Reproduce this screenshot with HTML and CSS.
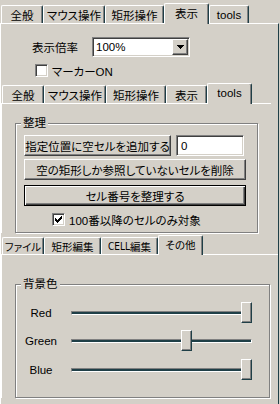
FILE: index.html
```html
<!DOCTYPE html>
<html>
<head>
<meta charset="utf-8">
<title>設定</title>
<link rel="stylesheet" href="styles.css">
</head>
<body>
<div class="tabstrip strip-top">
	<div class="tab w42">全般</div>
	<div class="tab w62">マウス操作</div>
	<div class="tab w59">矩形操作</div>
	<div class="tab sel w45">表示</div>
	<div class="tab w40">tools</div>
</div>
<div class="page outer">
	<div class="zoomrow">
		<span class="caption">表示倍率</span>
		<div class="combo sunken">
			<span class="combo-text">100%</span>
			<span class="combo-btn raised"><svg width="7" height="4" viewBox="0 0 7 4"><path d="M0 0h7v1h-1v1h-1v1h-1v1h-1v-1h-1v-1h-1v-1h-1z" fill="#000"/></svg></span>
		</div>
	</div>
	<div class="checkrow markrow">
		<span class="check sunken"></span>
		<span>マーカーON</span>
	</div>

	<!-- tools page -->
	<div class="subtabs mid">
		<div class="tabstrip strip-mid">
			<div class="tab w42">全般</div>
			<div class="tab w62">マウス操作</div>
			<div class="tab w60">矩形操作</div>
			<div class="tab w41">表示</div>
			<div class="tab sel w45">tools</div>
		</div>
		<div class="page">
			<div class="group tidy">
				<span class="group-title">整理</span>
				<div class="btnrow">
					<div class="btn raised add">指定位置に空セルを追加する</div>
					<div class="edit sunken">0</div>
				</div>
				<div class="btn raised wide gap3">空の矩形しか参照していないセルを削除</div>
				<div class="btn default wide gap5">セル番号を整理する</div>
				<div class="checkrow only100">
					<span class="check sunken"><svg width="9" height="9" viewBox="0 0 9 9"><path d="M1 3h1v3h-1z M2 4h1v3h-1z M3 5h1v3h-1z M4 4h1v3h-1z M5 3h1v3h-1z M6 2h1v3h-1z M7 1h1v3h-1z" fill="#000"/></svg></span>
					<span>100番以降のセルのみ対象</span>
				</div>
			</div>
		</div>
	</div>

	<!-- other page -->
	<div class="subtabs low">
		<div class="tabstrip strip-low">
			<div class="tab w42">ファイル</div>
			<div class="tab w57">矩形編集</div>
			<div class="tab w57"><span class="narrow">CELL</span>編集</div>
			<div class="tab sel w45">その他</div>
		</div>
		<div class="page">
			<div class="group bgcolor">
				<span class="group-title">背景色</span>
				<div class="srow">
					<span class="slabel">Red</span>
					<div class="slider"><div class="track"></div><div class="thumb" style="left:170px"></div></div>
				</div>
				<div class="srow gap7">
					<span class="slabel">Green</span>
					<div class="slider"><div class="track"></div><div class="thumb" style="left:110px"></div></div>
				</div>
				<div class="srow gap8">
					<span class="slabel">Blue</span>
					<div class="slider"><div class="track"></div><div class="thumb" style="left:170px"></div></div>
				</div>
			</div>
		</div>
	</div>
</div>
</body>
</html>
```

FILE: styles.css
```css
* {
	box-sizing: border-box;
}
body {
	margin: 0;
	width: 280px;
	height: 404px;
	overflow: hidden;
	display: flex;
	flex-direction: column;
	background-color: #d4d0c8;
	color: #000;
	font-family: "Liberation Sans", "Noto Sans CJK JP", sans-serif;
	font-size: 11.5px;
	font-feature-settings: "palt";
}

/* tab strips */
.tabstrip {
	display: flex;
	align-items: flex-end;
	padding-left: 1px;
	flex-shrink: 0;
}
.strip-top { height: 23px; }
.strip-mid { height: 20px; }
.strip-low { height: 19px; }
.tab {
	height: 18px;
	display: flex;
	align-items: center;
	justify-content: center;
	white-space: nowrap;
	border-top: 1px solid #fff;
	border-left: 1px solid #fff;
	border-right: 1px solid #1f3f47;
	border-radius: 2px 2px 0 0;
	box-shadow: inset -1px 0 #808080;
}
.strip-low .tab {
	height: 17px;
	font-size: 10.5px;
}
.narrow { font-family: "DejaVu Sans Condensed", "Liberation Sans Narrow", sans-serif; font-size: 10px; }
.tab.sel {
	height: 21px;
	margin-bottom: -1px;
	padding-bottom: 2px;
	position: relative;
	z-index: 1;
	background-color: #d4d0c8;
}
.strip-low .tab.sel { height: 20px; }
.w40 { width: 40px; }
.w41 { width: 41px; }
.w42 { width: 42px; }
.w45 { width: 45px; }
.w57 { width: 57px; }
.w59 { width: 59px; }
.w60 { width: 60px; }
.w62 { width: 62px; }

/* pages */
.page {
	border-top: 1px solid #fff;
	border-left: 1px solid #fff;
}
.outer {
	flex: 1;
	width: 279px;
	border-right: 1px solid #1f3f47;
}
.subtabs.mid { width: 270px; }
.subtabs.low { width: 277px; }

/* 3d borders */
.raised {
	border: 1px solid;
	border-color: #fff #404040 #404040 #fff;
	box-shadow: inset -1px -1px #808080;
	background-color: #d4d0c8;
}
.sunken {
	border: 1px solid;
	border-color: #808080 #fff #fff #808080;
	box-shadow: inset 1px 1px #404040, inset -1px -1px #d4d0c8;
	background-color: #fff;
}

/* display page */
.zoomrow {
	display: flex;
	align-items: center;
	height: 20px;
	margin-top: 13px;
	padding-left: 31px;
}
.caption { width: 60px; }
.combo {
	width: 98px;
	height: 20px;
	padding: 1px;
	display: flex;
	align-items: center;
}
.combo-text { padding-left: 2px; }
.combo-btn {
	margin-left: auto;
	width: 16px;
	height: 16px;
	display: flex;
	align-items: center;
	justify-content: center;
}
.checkrow {
	display: flex;
	align-items: center;
	gap: 4px;
	height: 13px;
}
.markrow {
	margin-top: 7px;
	margin-bottom: 6px;
	padding-left: 34px;
}
.check {
	width: 13px;
	height: 13px;
	padding: 1px;
	display: flex;
}

/* group boxes */
.group {
	position: relative;
	border: 1px solid #808080;
	box-shadow: inset 1px 1px #fff, 1px 1px #fff;
	margin-left: 13px;
}
.group-title {
	position: absolute;
	top: -7px;
	left: 5px;
	padding: 0 2px;
	line-height: 13px;
	background-color: #d4d0c8;
}
.tidy {
	width: 243px;
	margin-top: 19px;
	margin-bottom: 2px;
	padding: 11px 0 6px 8px;
}
.btnrow {
	display: flex;
	gap: 5px;
}
.btn {
	height: 21px;
	display: flex;
	align-items: center;
	justify-content: center;
	white-space: nowrap;
}
.add { width: 147px; }
.edit {
	width: 68px;
	height: 21px;
	padding: 2px 4px;
	display: flex;
	align-items: center;
}
.wide { width: 222px; }
.gap3 { margin-top: 3px; }
.gap5 { margin-top: 5px; }
.default {
	border: 1px solid #000;
	box-shadow: inset 1px 1px #fff, inset -1px -1px #404040, inset -2px -2px #808080;
}
.only100 {
	margin-top: 7px;
	padding-left: 28px;
}

/* background colour page */
.bgcolor {
	width: 255px;
	margin-top: 29px;
	padding: 17px 0;
}
.srow {
	display: flex;
	align-items: center;
	height: 21px;
}
.gap7 { margin-top: 7px; }
.gap8 { margin-top: 8px; }
.slabel {
	width: 50px;
	text-align: center;
}
.slider {
	position: relative;
	width: 181px;
	height: 21px;
	margin-left: 5px;
}
.track {
	position: absolute;
	top: 9px;
	left: 0;
	right: 0;
	height: 4px;
	border-top: 1px solid #808080;
	border-left: 1px solid #808080;
	border-bottom: 1px solid #fff;
	border-right: 1px solid #fff;
	background-color: #1f3f47;
}
.thumb {
	position: absolute;
	top: 0;
	width: 11px;
	height: 21px;
	border: 1px solid;
	border-color: #fff #1f3f47 #1f3f47 #fff;
	box-shadow: inset -1px -1px #808080;
	background-color: #d4d0c8;
}
```
